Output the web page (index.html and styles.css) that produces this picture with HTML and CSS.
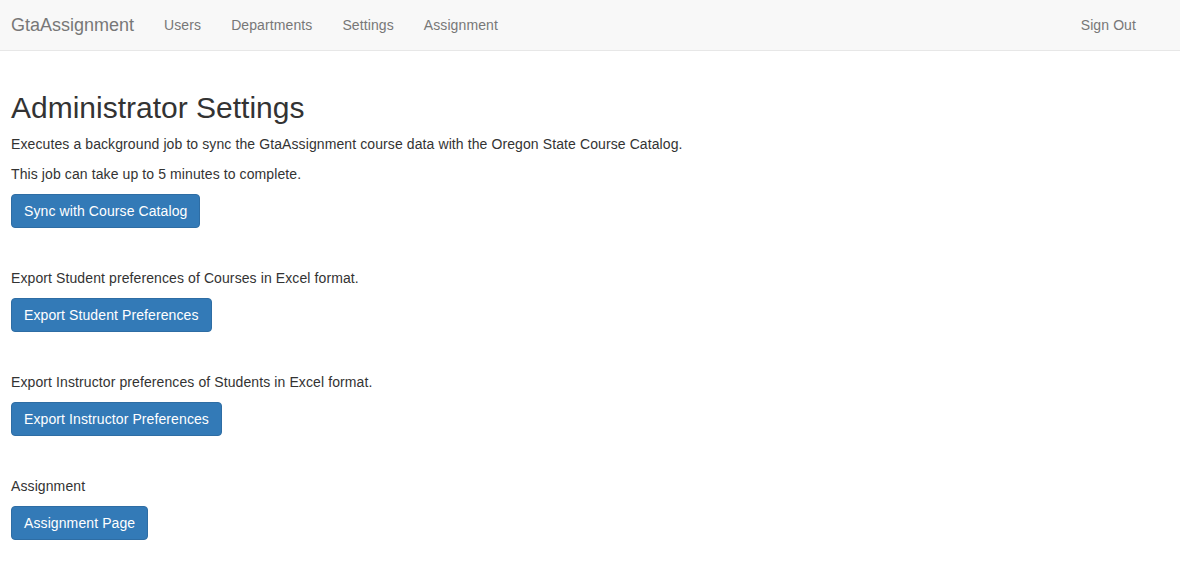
FILE: index.html
```html
<!DOCTYPE html>
<html lang="en">
<head>
<meta charset="utf-8">
<title>Administrator Settings</title>
<link rel="stylesheet" href="styles.css">
</head>
<body>
<nav class="navbar">
  <div class="navbar-inner">
    <a class="brand" href="#">GtaAssignment</a>
    <ul class="nav">
      <li><a href="#">Users</a></li>
      <li><a href="#">Departments</a></li>
      <li><a href="#">Settings</a></li>
      <li><a href="#">Assignment</a></li>
    </ul>
    <ul class="nav nav-right">
      <li><a href="#">Sign Out</a></li>
    </ul>
  </div>
</nav>
<main class="content">
  <h2 class="title">Administrator Settings</h2>
  <section class="block">
    <p>Executes a background job to sync the GtaAssignment course data with the Oregon State Course Catalog.</p>
    <p>This job can take up to 5 minutes to complete.</p>
    <button class="btn">Sync with Course Catalog</button>
  </section>
  <section class="block">
    <p>Export Student preferences of Courses in Excel format.</p>
    <button class="btn">Export Student Preferences</button>
  </section>
  <section class="block">
    <p>Export Instructor preferences of Students in Excel format.</p>
    <button class="btn">Export Instructor Preferences</button>
  </section>
  <section class="block">
    <p>Assignment</p>
    <button class="btn">Assignment Page</button>
  </section>
</main>
</body>
</html>
```
FILE: styles.css
```css
html, body {
  margin: 0;
  padding: 0;
}
body {
  font-family: "Liberation Sans", Arial, Helvetica, sans-serif;
  font-size: 14px;
  line-height: 20px;
  letter-spacing: 0.1px;
  color: #333;
  background: #fff;
}
.navbar {
  background: #f8f8f8;
  border-bottom: 1px solid #e7e7e7;
  height: 50px;
}
.navbar-inner {
  display: flex;
  align-items: stretch;
  height: 50px;
  padding: 0 29px 0 0;
}
.brand {
  font-size: 18px;
  line-height: 20px;
  letter-spacing: 0;
  padding: 15px 15px 15px 11px;
  color: #777;
  text-decoration: none;
}
.nav {
  list-style: none;
  margin: 0;
  padding: 0;
  display: flex;
}
.nav a {
  display: block;
  padding: 15px;
  line-height: 20px;
  color: #777;
  text-decoration: none;
}
.nav-right {
  margin-left: auto;
}
.content {
  padding: 20px 11px 0 11px;
}
.title {
  font-size: 30px;
  font-weight: 500;
  line-height: 33px;
  letter-spacing: 0;
  margin: 20px 0 10px;
  color: #333;
}
.block {
  margin-bottom: 40px;
}
.block p {
  margin: 0 0 10px;
}
.btn {
  display: inline-block;
  font-family: inherit;
  font-size: 14px;
  line-height: 20px;
  letter-spacing: 0.1px;
  padding: 6px 12px;
  color: #fff;
  background: #337ab7;
  border: 1px solid #2e6da4;
  border-radius: 4px;
  cursor: pointer;
}
```
